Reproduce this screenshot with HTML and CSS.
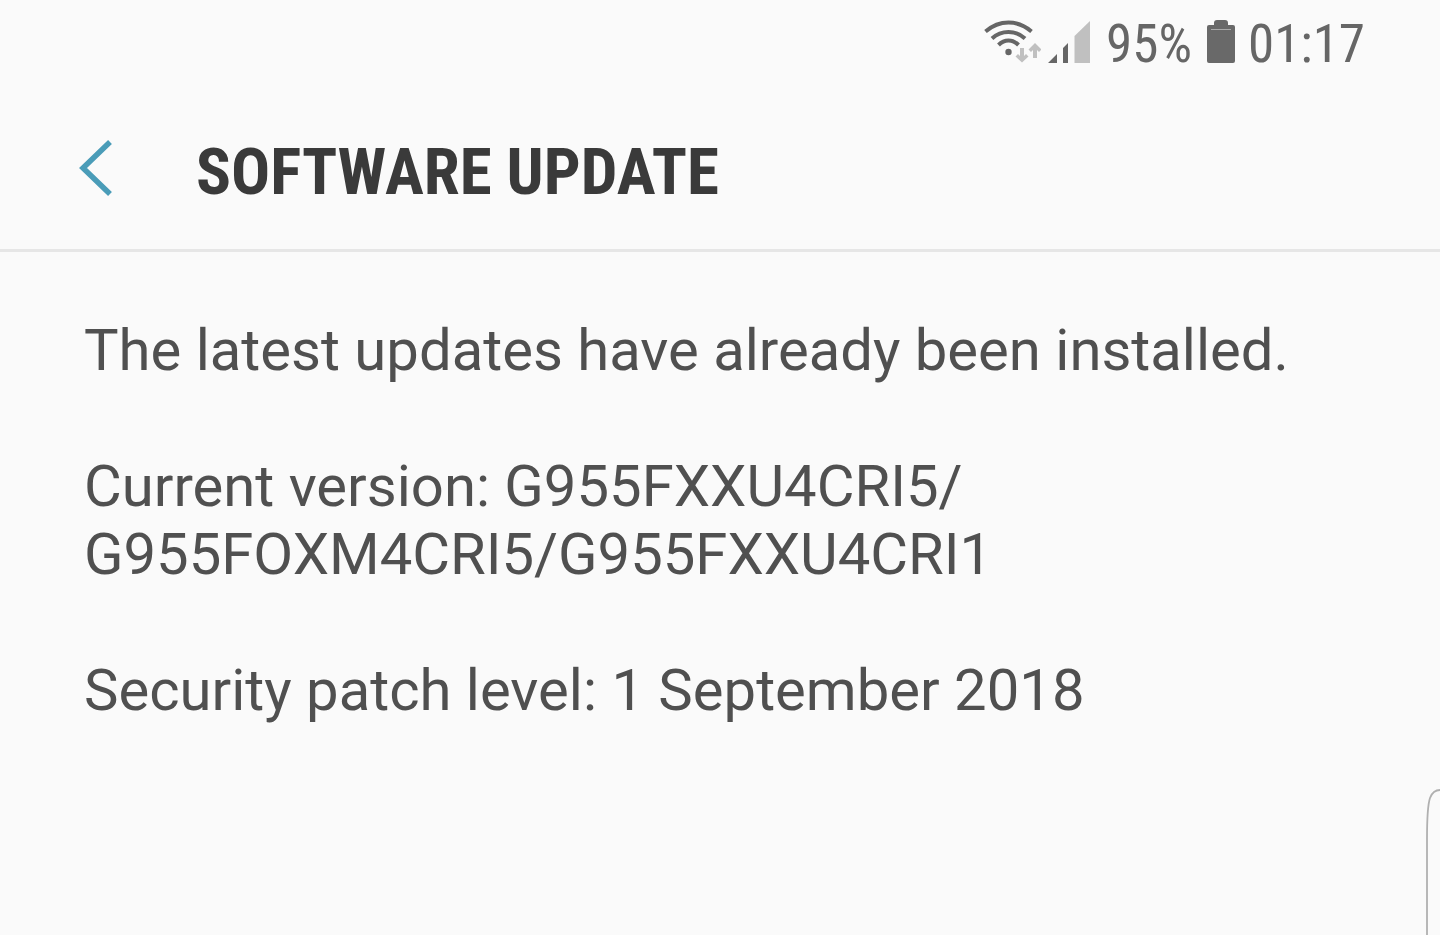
FILE: index.html
```html
<!DOCTYPE html>
<html lang="en">
<head>
    <meta charset="UTF-8">
    <meta name="viewport" content="width=device-width, initial-scale=1.0">
    <title>Software update</title>
    <link rel="stylesheet" href="styles.css">
</head>
<body class="page">
    <div class="status">
        <svg class="status__wifi" width="58" height="48" viewBox="0 0 58 48" fill="none" aria-hidden="true">
            <g stroke="#666" stroke-width="4">
                <path d="M2.500 13.500Q13 4.500 25.500 4.500T48.500 13.500"/>
                <path d="M9 20.500Q16 14 25.500 14T42 20.500"/>
                <path d="M15.500 27Q20 22.500 25.500 22.500T35.500 27"/>
            </g>
            <circle cx="25.500" cy="34" r="3.200" fill="#666"/>
            <path d="M37 30h4v8l2-2 2.500 2.500L39 44.500 32.500 38.500 35 36l2 2zM50 40h4v-8l2 2 2.500-2.500L52 25l-6.500 6.500L48 34l2-2z" fill="#c0c0c0"/>
        </svg>
        <svg class="status__signal" width="42" height="42" viewBox="0 0 42 42" aria-hidden="true">
            <path d="M0 42l9-9v9zM15 42V27l5-5v20z" fill="#666"/>
            <path d="M26.500 42V15L42 0v42z" fill="#c0c0c0"/>
        </svg>
        <span class="status__percent">95%</span>
        <svg class="status__battery" width="28" height="43" viewBox="0 0 28 43" aria-hidden="true">
            <path d="M7 5V3q0-3 3-3h8q3 0 3 3v2h5q2 0 2 2v34q0 2-2 2H2q-2 0-2-2V7q0-2 2-2z" fill="#696969"/>
            <path d="M4 9.500h20" stroke="#aaa"/>
        </svg>
        <span class="status__time">01:17</span>
    </div>

    <header class="header">
        <button class="header__back" type="button" aria-label="Back">
            <svg width="34" height="58" viewBox="0 0 34 58" fill="none" stroke="#4a9cb8" stroke-width="5.500">
                <path d="M31 3L4 29l27 26"/>
            </svg>
        </button>
        <h1 class="header__title">SOFTWARE UPDATE</h1>
    </header>

    <main class="content">
        <p>The latest updates have already been installed.</p>
        <p>Current version: G955FXXU4CRI5/<wbr>G955FOXM4CRI5/G955FXXU4CRI1</p>
        <p>Security patch level: 1 September 2018</p>
    </main>

    <!-- edge panel handle -->
    <svg class="edge" width="14" height="146" viewBox="0 0 14 146" fill="none" stroke="#b0b0b0" stroke-width="1.800" aria-hidden="true">
        <path d="M1 146V50C1 22 2 15 4 9Q7 1 14 1"/>
    </svg>
</body>
</html>
```

FILE: styles.css
```css
*, ::after, ::before {
    box-sizing: border-box;
}
body{
    margin: 0;
    font-family: Roboto, sans-serif;
    background: #fafafa;
    color: #505050;
}
h1,p{
    margin: 0;
}
.page{
    min-height: 100vh;
}

.status{
    display: flex;
    align-items: center;
    justify-content: flex-end;
    height: 88px;
    padding-right: 75px;
    font-family: "Roboto Condensed", Roboto, sans-serif;
    font-size: 53px;
    line-height: 62px;
    color: #666;
}
.status svg{
    flex-shrink: 0;
    margin-bottom: 5px;
}
.status__signal{
    margin-left: 7px;
}
.status__percent{
    margin-left: 16px;
}
.status__battery{
    margin-left: 15px;
}
.status__time{
    margin-left: 13px;
}

.header{
    display: flex;
    align-items: flex-start;
    padding: 46px 79px 39px;
    border-bottom: 3px solid #e6e6e6;
}
.header__back{
    display: flex;
    align-items: center;
    width: 117px;
    height: 68px;
    padding: 0;
    border: 0;
    background: none;
    cursor: pointer;
}
.header__title{
    font-family: "Roboto Condensed", Roboto, sans-serif;
    font-size: 65px;
    line-height: 76px;
    font-weight: bold;
    color: #3a3a3a;
}

.content{
    display: flex;
    flex-direction: column;
    gap: 68px;
    padding: 64px 84px;
    font-size: 58px;
    line-height: 68px;
}

.edge{
    position: fixed;
    right: 0;
    bottom: 0;
}
```
